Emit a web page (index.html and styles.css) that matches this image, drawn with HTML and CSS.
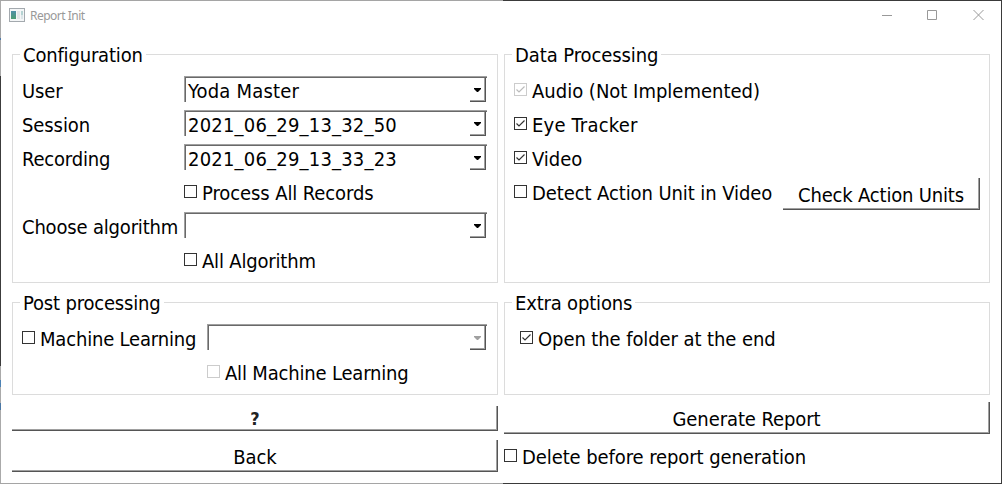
FILE: index.html
```html
<!DOCTYPE html>
<html lang="en">
<head>
<meta charset="utf-8">
<title>Report Init</title>
<link rel="stylesheet" href="styles.css">
</head>
<body>
<div class="window">
  <header class="titlebar">
    <svg class="app-icon" width="16" height="14" viewBox="0 0 16 14" shape-rendering="crispEdges"><defs><linearGradient id="g" x1="0" y1="0" x2="0" y2="1"><stop offset="0" stop-color="#4f8fa8"/><stop offset="1" stop-color="#4b9c72"/></linearGradient></defs><rect x=".5" y=".5" width="15" height="13" fill="#f4f6f7" stroke="#a3a9ae"/><rect x="2" y="3" width="5" height="8" fill="url(#g)"/><rect x="8" y="3" width="3" height="8" fill="#e2e5e7"/><rect x="12" y="3" width="2" height="4" fill="#b5d3d3"/><rect x="12" y="7" width="2" height="4" fill="#dce5e8"/></svg>
    <span class="title">Report Init</span>
    <svg class="controls" width="102" height="10" viewBox="0 0 102 10" fill="none" stroke="#999"><path d="M0 5.500H10M45.500 .5h9v9h-9z"/><path d="M91.500 0l10 10M101.500 0l-10 10"/></svg>
  </header>
  <main class="content">
    <fieldset class="group configuration">
      <legend class="tight">Configuration</legend>
      <span class="snug">User</span><div class="combo"><span class="airy">Yoda Master</span><i class="drop"></i></div>
      <span class="snug">Session</span><div class="combo"><span class="airy">2021_06_29_13_32_50</span><i class="drop"></i></div>
      <span class="tight">Recording</span><div class="combo"><span class="airy">2021_06_29_13_33_23</span><i class="drop"></i></div>
      <label class="check second"><i class="box"></i><span class="snug">Process All Records</span></label>
      <span class="tight">Choose algorithm</span><div class="combo"><i class="drop"></i></div>
      <label class="check second"><i class="box"></i><span class="tight">All Algorithm</span></label>
    </fieldset>
    <fieldset class="group data">
      <legend class="snug">Data Processing</legend>
      <label class="check disabled"><i class="box"><svg width="13" height="13"><path d="M2.500 6.500L5 9L10.500 3.500"/></svg></i><span>Audio (Not Implemented)</span></label>
      <label class="check"><i class="box"><svg width="13" height="13"><path d="M2.500 6.500L5 9L10.500 3.500"/></svg></i><span class="airy">Eye Tracker</span></label>
      <label class="check"><i class="box"><svg width="13" height="13"><path d="M2.500 6.500L5 9L10.500 3.500"/></svg></i><span>Video</span></label>
      <div class="detect"><label class="check"><i class="box"></i><span class="snug">Detect Action Unit in Video</span></label><button class="check-units"><span class="tight">Check Action Units</span></button></div>
    </fieldset>
    <fieldset class="group post">
      <legend class="tight">Post processing</legend>
      <label class="check"><i class="box"></i><span class="tight">Machine Learning</span></label><div class="combo disabled"><i class="drop"></i></div>
      <label class="check disabled second"><i class="box"></i><span class="tight">All Machine Learning</span></label>
    </fieldset>
    <fieldset class="group extra">
      <legend class="tight">Extra options</legend>
      <label class="check"><i class="box"><svg width="13" height="13"><path d="M2.500 6.500L5 9L10.500 3.500"/></svg></i><span class="snug">Open the folder at the end</span></label>
    </fieldset>
    <button class="help"><span>?</span></button>
    <button class="generate"><span class="snug">Generate Report</span></button>
    <button class="back"><span class="snug">Back</span></button>
    <label class="check delete"><i class="box"></i><span class="snug">Delete before report generation</span></label>
  </main>
</div>
</body>
</html>
```
FILE: styles.css
```css
* { box-sizing: border-box; }
body { margin: 0; background: #fff; color: #000; font: 20px/26px "DejaVu Sans Condensed", "DejaVu Sans", sans-serif; font-stretch: condensed; }
span, legend { white-space: nowrap; }
.tight { letter-spacing: -.18px; }
.snug { letter-spacing: -.09px; }
.airy { letter-spacing: .2px; }
.window {
  width: 1002px; height: 484px; overflow: hidden; padding: 1px;
  background:
    linear-gradient(90deg, #a5a5a5 503px, #3a3a3a 503px) 0 0 / 100% 1px no-repeat,
    linear-gradient(90deg, #a5a5a5 503px, #3a3a3a 503px) 0 100% / 100% 1px no-repeat,
    linear-gradient(#3a3a3a, #3a3a3a) 100% 0 / 1px 100% no-repeat,
    linear-gradient(#aaa 38px, #4f79a8 38px 40px, #aaa 40px 76px, #3c3c3c 76px 366px, #aaa 366px 380px, #4d82b4 380px 387px, #aaa 387px 403px, #4a77a5 403px 410px, #aaa 410px) 0 0 / 1px 100% no-repeat,
    #fff;
}
.titlebar { display: flex; align-items: center; height: 30px; padding: 0 17px 2px 8px; }
.title { margin-left: 5px; padding-top: 1px; color: #999; font: 12px/16px "Noto Sans", sans-serif; letter-spacing: -.5px; }
.controls { margin-left: auto; }
.content { display: grid; grid-template-columns: 486px 486px; grid-template-rows: 240px 112px 38px 38px; column-gap: 6px; padding: 11px 11px 0; }
.group { display: grid; min-width: 0; margin: 0; padding: 12px 10px 0 9px; border: 1px solid #dcdcdc; align-content: start; }
.group legend { height: 24px; padding: 0 3px; margin-left: -2px; }
.configuration { height: 241px; grid-template-columns: 162px 303px; grid-auto-rows: 34px; }
.second { grid-column: 2; }
.combo { display: flex; height: 26px; margin-top: -2px; padding-left: 3px; border-top: 1px solid #a0a0a0; border-left: 1px solid #a0a0a0; box-shadow: inset 1px 1px #696969; line-height: 28px; }
.drop { display: flex; justify-content: center; width: 16px; height: 24px; margin: 1px 1px 0 auto; padding-top: 10px; border-right: 1px solid #555; border-bottom: 1px solid #555; box-shadow: inset -1px -1px #a0a0a0; }
.drop::before { content: ""; width: 7px; height: 4px; background: #000; clip-path: polygon(0 0, 100% 0, 100% 25%, 57% 100%, 43% 100%, 0 25%); }
.disabled .drop::before { background: #a0a0a0; }
.check { display: flex; gap: 5px; height: 24px; }
.box { flex: none; width: 13px; height: 13px; margin-top: 5px; border: 1px solid #333; }
.box svg { display: block; margin: -1px; fill: none; stroke: #333; stroke-width: 1.2; }
.disabled .box { border-color: #ccc; }
.disabled .box svg { stroke: #bbb; }
.data { height: 241px; grid-auto-rows: 34px; }
.detect { display: flex; justify-content: space-between; }
button { display: flex; align-items: center; justify-content: center; padding: 2px 0 0; border: 0; background: #fff; color: #000; font: inherit; border-right: 1px solid #555; border-bottom: 1px solid #555; box-shadow: inset -1px -1px #a0a0a0; }
.check-units { width: 197px; height: 32px; margin: -2px -1px 0 0; }
.post { height: 105px; margin-top: 8px; grid-template-columns: 185px 280px; grid-auto-rows: 34px; }
.extra { height: 105px; margin-top: 8px; padding: 12px 15px 0; }
.group.extra legend { margin-left: -8px; }
.help { height: 25px; margin-top: 12px; padding-left: 1px; color: #222; font-weight: bold; font-size: 18px; }
.generate { height: 32px; margin-top: 8px; }
.back { height: 32px; margin-top: 8px; padding-left: 1px; }
.delete { margin-top: 12px; }
```
